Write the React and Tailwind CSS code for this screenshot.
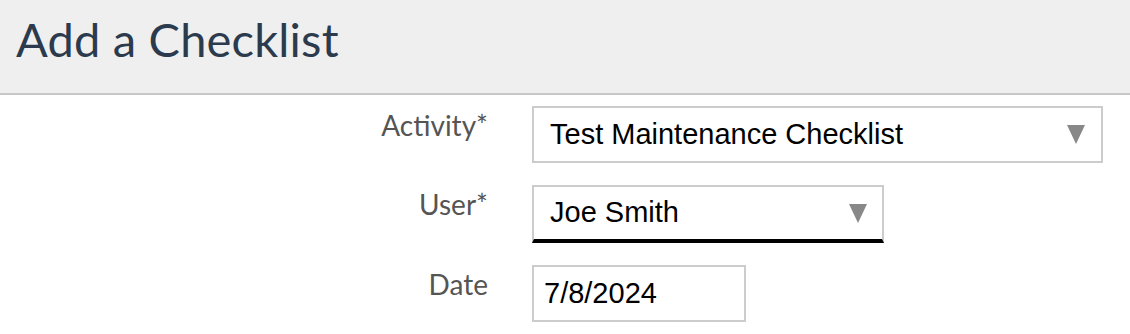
function Caret() {
  return (
    <svg width="18" height="19" viewBox="0 0 18 19" className="shrink-0">
      <polygon points="0,0 18,0 9,19" fill="#888888" />
    </svg>
  );
}

export default function App() {
  return (
    <div className="w-[1130px] h-[334px] bg-white overflow-hidden">
      <div className="h-[95px] bg-[#efefef] border-b-2 border-[#c8c8c8] flex items-start pl-[16px] pt-[16px]">
        <h1 className="text-[47px] leading-none text-[#2b3b4d] font-['Lato',sans-serif] tracking-[0.2px]">Add a Checklist</h1>
      </div>
      <div className="grid grid-cols-[490px_auto] gap-x-[42px] pt-[11px] font-['Lato',sans-serif]">
        <div className="text-right text-[28px] leading-none text-[#555555] pt-[5px] pr-[2px]">Activity*</div>
        <div className="w-[571px] h-[57px] border-2 border-[#cccccc] flex items-center justify-between pl-[16px] pr-[16px] font-['Liberation_Sans',Arial,sans-serif] text-[29px] text-black">
          <span>Test Maintenance Checklist</span>
          <Caret />
        </div>
        <div className="text-right text-[28px] leading-none text-[#555555] pt-[5px] pr-[2px] mt-[22px]">User*</div>
        <div className="mt-[22px] w-[352px] h-[58px] border-2 border-[#cccccc] border-b-[4px] border-b-black flex items-center justify-between pl-[16px] pr-[15px] font-['Liberation_Sans',Arial,sans-serif] text-[29px] text-black">
          <span>Joe Smith</span>
          <Caret />
        </div>
        <div className="text-right text-[28px] leading-none text-[#555555] pt-[5px] pr-[2px] mt-[22px]">Date</div>
        <div className="mt-[22px] w-[214px] h-[57px] border-2 border-[#cccccc] flex items-center pl-[10px] font-['Liberation_Sans',Arial,sans-serif] text-[29px] text-black">
          <span>7/8/2024</span>
        </div>
      </div>
    </div>
  );
}
